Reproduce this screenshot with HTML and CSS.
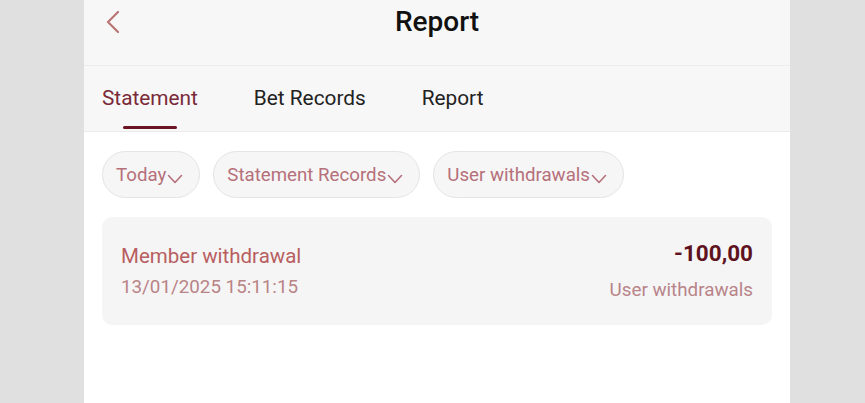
FILE: index.html
```html
<!DOCTYPE html>
<html>
<head>
<meta charset="utf-8">
<link rel="stylesheet" href="styles.css">
</head>
<body>
<div class="page">
  <header class="topbar">
    <span class="back">
      <svg width="16" height="24" viewBox="0 0 16 24"><path d="M13 2 L3 12 L13 22" fill="none" stroke="#b97474" stroke-width="2.2" stroke-linecap="round" stroke-linejoin="round"/></svg>
    </span>
    <h1 class="title">Report</h1>
  </header>
  <nav class="tabs">
    <div class="tab active">Statement</div>
    <div class="tab">Bet Records</div>
    <div class="tab">Report</div>
  </nav>
  <section class="content">
    <div class="filters">
      <div class="pill">Today<span class="chev"><svg width="16" height="10" viewBox="0 0 16 10"><path d="M1.5 1.5 L8 8.5 L14.5 1.5" fill="none" stroke="#b5707a" stroke-width="1.6" stroke-linecap="round" stroke-linejoin="round"/></svg></span></div>
      <div class="pill">Statement Records<span class="chev"><svg width="16" height="10" viewBox="0 0 16 10"><path d="M1.5 1.5 L8 8.5 L14.5 1.5" fill="none" stroke="#b5707a" stroke-width="1.6" stroke-linecap="round" stroke-linejoin="round"/></svg></span></div>
      <div class="pill">User withdrawals<span class="chev"><svg width="16" height="10" viewBox="0 0 16 10"><path d="M1.5 1.5 L8 8.5 L14.5 1.5" fill="none" stroke="#b5707a" stroke-width="1.6" stroke-linecap="round" stroke-linejoin="round"/></svg></span></div>
    </div>
    <div class="card">
      <div class="col">
        <div class="name">Member withdrawal</div>
        <div class="date">13/01/2025 15:11:15</div>
      </div>
      <div class="col right">
        <div class="amount">-100,00</div>
        <div class="type">User withdrawals</div>
      </div>
    </div>
  </section>
</div>
</body>
</html>
```
FILE: styles.css
```css
html, body {
  margin: 0;
  padding: 0;
  height: 100%;
}
body {
  background: #e0e0e0;
  font-family: Roboto, "Noto Sans", sans-serif;
  overflow: hidden;
}
.page {
  width: 706px;
  margin-left: 84px;
  height: 403px;
  background: #ffffff;
}
.topbar {
  height: 65px;
  background: #f7f7f7;
  border-bottom: 1px solid #ececec;
  display: flex;
  align-items: center;
  justify-content: center;
  position: relative;
}
.back {
  position: absolute;
  left: 21px;
  top: 10px;
  display: flex;
}
.title {
  margin: 0 0 22px 0;
  font-size: 28px;
  font-weight: 500;
  color: #111;
}
.tabs {
  height: 65px;
  background: #f7f7f7;
  border-bottom: 1px solid #ebebeb;
  display: flex;
  align-items: flex-start;
  padding-left: 18px;
}
.tab {
  font-size: 20.8px;
  color: #222;
  padding-top: 20px;
  height: 45px;
  box-sizing: border-box;
  margin-right: 56px;
  position: relative;
}
.tab.active {
  color: #7a2a38;
}
.tab.active::after {
  content: "";
  position: absolute;
  left: 21px;
  width: 54px;
  top: 60px;
  height: 3px;
  border-radius: 2px;
  background: #6d1424;
}
.content {
  padding: 19px 18px 0 18px;
}
.filters {
  display: flex;
  gap: 13px;
}
.pill {
  height: 47px;
  box-sizing: border-box;
  border: 1px solid #e4e4e4;
  border-radius: 24px;
  background: #f7f6f6;
  display: flex;
  align-items: center;
  padding: 0 16px 0 13px;
  font-size: 18.7px;
  color: #b5707a;
}
.chev {
  display: flex;
  margin-top: 9px;
  margin-left: 1px;
}
.card {
  margin-top: 19px;
  height: 108px;
  background: #f5f5f5;
  border-radius: 10px;
  display: flex;
  justify-content: space-between;
  padding: 0 19px;
  box-sizing: border-box;
}
.col {
  display: flex;
  flex-direction: column;
  padding-top: 27px;
}
.right {
  align-items: flex-end;
  padding-top: 23px;
}
.name {
  font-size: 20.5px;
  color: #b85e60;
}
.date {
  margin-top: 8px;
  font-size: 18.8px;
  color: #b98486;
}
.amount {
  font-size: 22.5px;
  font-weight: 700;
  color: #5e1220;
}
.type {
  margin-top: 13px;
  font-size: 18.8px;
  color: #b88489;
}
```
